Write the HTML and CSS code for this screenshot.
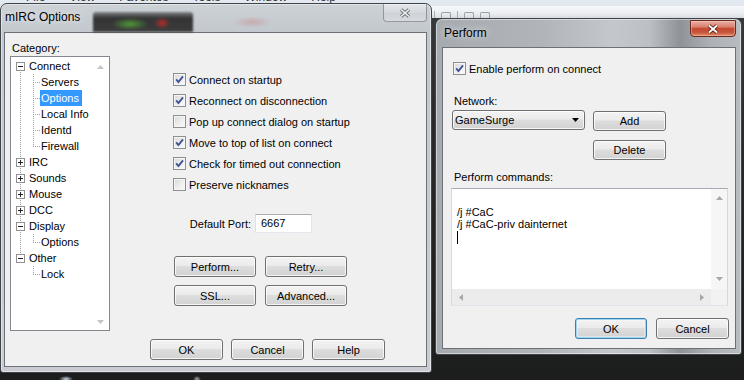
FILE: index.html
```html
<!DOCTYPE html>
<html>
<head>
<meta charset="utf-8">
<title>mIRC Options</title>
<link rel="stylesheet" href="styles.css">
</head>
<body>
<div class="desk">
  <div class="topstrip">
    <div class="menubar"><span>File</span><span>View</span><span>Favorites</span><span>Tools</span><span>Window</span><span>Help</span></div>
    <div class="toolbar"><i class="tsep"></i><i class="ticon"></i><i class="tsep"></i><i class="ticon"></i><i class="ticon"></i></div>
  </div>

  <div class="win win-opts">
    <div class="titlebar tb-opts">
      <span class="title">mIRC Options</span>
      <span class="cbtn cbtn-inactive">
        <svg width="12" height="10" viewBox="0 0 12 10"><path d="M2 1.5L10 8.5M10 1.5L2 8.5" stroke="#6b6f74" stroke-width="3.4" fill="none"/><path d="M2 1.5L10 8.5M10 1.5L2 8.5" stroke="#f4f4f4" stroke-width="1.6" fill="none"/></svg>
      </span>
    </div>
    <div class="client opts-client">
      <div class="opts-main">
        <div class="cat">
          <div class="cat-lbl">Category:</div>
          <div class="tree">
            <div class="tree-list">
              <div class="node lrb"><i class="exp minus"></i><span class="nl">Connect</span></div>
              <div class="node child lr lc"><span class="nl">Servers</span></div>
              <div class="node child lr lc"><span class="nl sel">Options</span></div>
              <div class="node child lr lc"><span class="nl">Local Info</span></div>
              <div class="node child lr lc"><span class="nl">Identd</span></div>
              <div class="node child lr lct"><span class="nl">Firewall</span></div>
              <div class="node lr"><i class="exp plus"></i><span class="nl">IRC</span></div>
              <div class="node lr"><i class="exp plus"></i><span class="nl">Sounds</span></div>
              <div class="node lr"><i class="exp plus"></i><span class="nl">Mouse</span></div>
              <div class="node lr"><i class="exp plus"></i><span class="nl">DCC</span></div>
              <div class="node lr"><i class="exp minus"></i><span class="nl">Display</span></div>
              <div class="node child lr lct"><span class="nl">Options</span></div>
              <div class="node lrt"><i class="exp minus"></i><span class="nl">Other</span></div>
              <div class="node child lct"><span class="nl">Lock</span></div>
            </div>
            <div class="tree-sb">
              <svg width="7" height="4" viewBox="0 0 7 4"><polygon points="0,4 3.5,0 7,4" fill="#c4c4c4"/></svg>
              <svg width="7" height="4" viewBox="0 0 7 4"><polygon points="0,0 7,0 3.5,4" fill="#c4c4c4"/></svg>
            </div>
          </div>
        </div>
        <div class="opts-right">
          <div class="checks">
            <div class="chk"><span class="box"><svg width="11" height="11" viewBox="0 0 11 11"><path d="M2.2 5.4L4.4 8L9 2.4" stroke="#3d5392" stroke-width="1.9" fill="none"/></svg></span>Connect on startup</div>
            <div class="chk"><span class="box"><svg width="11" height="11" viewBox="0 0 11 11"><path d="M2.2 5.4L4.4 8L9 2.4" stroke="#3d5392" stroke-width="1.9" fill="none"/></svg></span>Reconnect on disconnection</div>
            <div class="chk"><span class="box"></span>Pop up connect dialog on startup</div>
            <div class="chk"><span class="box"><svg width="11" height="11" viewBox="0 0 11 11"><path d="M2.2 5.4L4.4 8L9 2.4" stroke="#3d5392" stroke-width="1.9" fill="none"/></svg></span>Move to top of list on connect</div>
            <div class="chk"><span class="box"><svg width="11" height="11" viewBox="0 0 11 11"><path d="M2.2 5.4L4.4 8L9 2.4" stroke="#3d5392" stroke-width="1.9" fill="none"/></svg></span>Check for timed out connection</div>
            <div class="chk"><span class="box"></span>Preserve nicknames</div>
          </div>
          <div class="port"><span class="port-lbl">Default Port:</span><span class="edit">6667</span></div>
          <div class="btn-grid">
            <span class="btn">Perform...</span>
            <span class="btn">Retry...</span>
            <span class="btn">SSL...</span>
            <span class="btn">Advanced...</span>
          </div>
        </div>
      </div>
      <div class="opts-foot">
        <span class="btn w73">OK</span>
        <span class="btn w73">Cancel</span>
        <span class="btn w73">Help</span>
      </div>
    </div>
  </div>

  <div class="win win-perf">
    <div class="titlebar tb-perf">
      <span class="title">Perform</span>
      <span class="cbtn cbtn-red">
        <svg width="12" height="10" viewBox="0 0 12 10"><path d="M2 1.5L10 8.5M10 1.5L2 8.5" stroke="#4a1a12" stroke-width="3.6" fill="none"/><path d="M2 1.5L10 8.5M10 1.5L2 8.5" stroke="#ffffff" stroke-width="1.8" fill="none"/></svg>
      </span>
    </div>
    <div class="client perf-client">
      <div class="chk perf-chk"><span class="box"><svg width="11" height="11" viewBox="0 0 11 11"><path d="M2.2 5.4L4.4 8L9 2.4" stroke="#3d5392" stroke-width="1.9" fill="none"/></svg></span>Enable perform on connect</div>
      <div class="plbl net-lbl">Network:</div>
      <div class="net-grid">
        <div class="btn combo"><span>GameSurge</span><svg width="7" height="4" viewBox="0 0 7 4"><polygon points="0,0 7,0 3.5,4" fill="#000"/></svg></div>
        <span class="btn add">Add</span>
        <span class="btn del">Delete</span>
      </div>
      <div class="plbl cmd-lbl">Perform commands:</div>
      <div class="memo">
        <div class="memo-text">
          <div class="ln">&nbsp;</div>
          <div class="ln">/j #CaC</div>
          <div class="ln">/j #CaC-priv dainternet</div>
          <div class="ln"><i class="caret"></i></div>
        </div>
        <div class="vsb">
          <svg width="7" height="4" viewBox="0 0 7 4"><polygon points="0,4 3.5,0 7,4" fill="#a8a8a8"/></svg>
          <svg width="7" height="4" viewBox="0 0 7 4"><polygon points="0,0 7,0 3.5,4" fill="#a8a8a8"/></svg>
        </div>
        <div class="hsb">
          <svg width="4" height="7" viewBox="0 0 4 7"><polygon points="4,0 4,7 0,3.5" fill="#a8a8a8"/></svg>
          <svg width="4" height="7" viewBox="0 0 4 7"><polygon points="0,0 0,7 4,3.5" fill="#a8a8a8"/></svg>
        </div>
        <div class="corner"></div>
      </div>
      <div class="perf-foot">
        <span class="btn btn-def w72">OK</span>
        <span class="btn w73">Cancel</span>
      </div>
    </div>
  </div>
</div>
</body>
</html>
```
FILE: styles.css
```css
* { box-sizing: border-box; margin: 0; padding: 0; }
html, body { width: 744px; height: 380px; overflow: hidden; }
body {
  font-family: "Liberation Sans", Arial, sans-serif;
  font-size: 11px;
  color: #000;
  background: #202121;
}

.desk {
  position: relative;
  width: 744px;
  height: 380px;
  overflow: hidden;
  background:
    radial-gradient(7px 3px at 66px 379px, rgba(225,238,255,0.9), rgba(225,238,255,0)),
    radial-gradient(4px 3px at 197px 379px, rgba(230,230,230,0.7), rgba(230,230,230,0)),
    linear-gradient(to bottom, #3a3b3c 0, #2a2b2c 120px, #1c1d1d 380px);
}

/* background main window strip */
.topstrip {
  height: 18px;
  display: flex;
  flex-direction: column;
  background: linear-gradient(to bottom, #e3e9f1 0, #e3e9f1 5px, #cfd5dc 5px, #f6f7f9 6px, #eceff2 13px, #d7dbe0 18px);
}
.menubar {
  height: 4px;
  overflow: hidden;
  display: flex;
  padding-left: 26px;
  font-size: 12px;
  line-height: 14px;
  color: #333;
}
.menubar span { margin-top: -10px; margin-right: 24px; }
.toolbar {
  margin: 7px 0 0 434px;
  height: 7px;
  display: flex;
  align-items: flex-end;
  gap: 6px;
}
.tsep { width: 1px; height: 7px; background: #a9aeb5; }
.ticon { width: 10px; height: 6px; border: 1px solid #9aa0a7; border-bottom: none; border-radius: 2px 2px 0 0; }

/* windows */
.win {
  position: absolute;
  display: flex;
  flex-direction: column;
  border: 1px solid #3f444a;
  border-radius: 7px 7px 3px 3px;
  box-shadow: inset 0 0 0 1px rgba(255,255,255,0.45);
}
.win-opts {
  left: 0;
  top: 3px;
  width: 432px;
  height: 370px;
  padding: 0 4px 5px 3px;
  background: linear-gradient(to bottom, #cdd2d7 0, #c3c8ce 28px, #c9cdd2 100%);
}
.win-perf {
  left: 435px;
  top: 18px;
  width: 307px;
  height: 337px;
  padding: 0 5px 5px 6px;
  background: linear-gradient(to right, #a6abb0 0, #b1b5ba 35%, #c4c8cc 58%, #bcc0c4 70%, #8f9398 80%, #adb1b5 90%, #b9bdc1 100%);
}

.titlebar {
  height: 28px;
  flex: none;
  display: flex;
  align-items: flex-start;
  position: relative;
}
.title {
  position: relative;
  font-size: 12px;
  line-height: 16px;
  color: #000;
  text-shadow: 0 0 6px rgba(255,255,255,0.9);
}
.tb-opts .title { margin: 5px 0 0 1px; }
.tb-perf .title { margin: 6px 0 0 2px; }

/* blurred desktop content seen through the glass title bar */
.tb-opts::before {
  content: "";
  position: absolute;
  left: 89px;
  top: 8px;
  width: 100px;
  height: 20px;
  border-radius: 3px 3px 0 0;
  background:
    radial-gradient(18px 6px at 37px 12px, rgba(80,160,55,0.95), rgba(80,160,55,0)),
    radial-gradient(8px 6px at 69px 11px, rgba(200,40,40,0.9), rgba(200,40,40,0)),
    linear-gradient(to bottom, rgba(70,70,70,0.55) 0, rgba(38,38,38,0.92) 6px, rgba(45,45,45,0.9) 100%);
  filter: blur(1px);
}
.tb-opts::after {
  content: "";
  position: absolute;
  left: 228px;
  top: 12px;
  width: 40px;
  height: 12px;
  background: radial-gradient(20px 6px at 20px 6px, rgba(200,110,110,0.35), rgba(200,110,110,0));
}

.cbtn {
  margin-left: auto;
  display: flex;
  align-items: center;
  justify-content: center;
  border-radius: 0 0 4px 4px;
  position: relative;
}
.cbtn-inactive {
  width: 44px;
  height: 18px;
  border: 1px solid rgba(90,95,100,0.55);
  border-top: none;
  background: linear-gradient(rgba(255,255,255,0.45), rgba(255,255,255,0.2) 50%, rgba(255,255,255,0.08) 51%, rgba(255,255,255,0.3));
}
.cbtn-red {
  width: 46px;
  height: 17px;
  margin-top: 1px;
  border: 1px solid #6a2a20;
  background: linear-gradient(#eab0a4 0, #d9806c 40%, #c44a32 50%, #c6543a 75%, #e2906c 100%);
  box-shadow: inset 0 0 0 1px rgba(255,220,210,0.35);
}

.client {
  flex: 1;
  background: #f0f0f0;
  border: 1px solid #6c7177;
}

/* mIRC options client */
.opts-client { display: flex; flex-direction: column; }
.opts-main { display: flex; padding: 9px 0 0 5px; }
.cat { display: flex; flex-direction: column; }
.cat-lbl { height: 13px; line-height: 13px; margin-left: 2px; }
.tree {
  margin-top: 1px;
  width: 100px;
  height: 275px;
  border: 1px solid #828790;
  background: #fff;
  display: flex;
  --dv: repeating-linear-gradient(to bottom, #a0a0a0 0 1px, transparent 1px 2px);
  --dh: repeating-linear-gradient(to right, #a0a0a0 0 1px, transparent 1px 2px);
}
.tree-list { flex: 1; padding-top: 1px; }
.node {
  height: 16px;
  display: flex;
  align-items: center;
  white-space: nowrap;
  --r: none; --rp: 0px; --rh: 100%;
  --c: none; --cp: 0px; --ch: 100%;
  --h: none;
  background-image: var(--r), var(--c), var(--h);
  background-position: 9px var(--rp), 22px var(--cp), 22px 8px;
  background-size: 1px var(--rh), 1px var(--ch), 7px 1px;
  background-repeat: no-repeat;
}
.lr { --r: var(--dv); }
.lrb { --r: var(--dv); --rp: 8px; --rh: 8px; }
.lrt { --r: var(--dv); --rh: 8px; }
.lc { --c: var(--dv); --h: var(--dh); }
.lct { --c: var(--dv); --ch: 8px; --h: var(--dh); }

.exp {
  width: 9px;
  height: 9px;
  margin: 0 3px 0 5px;
  border: 1px solid #919191;
  background-color: #fff;
  background-repeat: no-repeat;
  background-position: center;
}
.minus { background-image: linear-gradient(#222, #222); background-size: 5px 1px; }
.plus {
  background-image: linear-gradient(#222, #222), linear-gradient(#222, #222);
  background-size: 5px 1px, 1px 5px;
}
.nl { line-height: 16px; height: 16px; padding: 0 2px 0 1px; }
.child { padding-left: 29px; }
.child .nl { padding: 0 3px 0 1px; }
.sel { background: #3399ff; color: #fff; }

.tree-sb {
  width: 17px;
  display: flex;
  flex-direction: column;
  justify-content: space-between;
  align-items: center;
  padding: 8px 0 6px;
}

.opts-right { margin-left: 63px; padding-top: 27px; }
.checks { display: flex; flex-direction: column; }
.chk { height: 21px; display: flex; align-items: center; gap: 3px; white-space: nowrap; }
.box {
  width: 13px;
  height: 13px;
  flex: none;
  display: flex;
  align-items: center;
  justify-content: center;
  border: 1px solid #8e8f8f;
  background: linear-gradient(135deg, #d6d6d6 0, #ececec 50%, #fbfbfb 100%);
  box-shadow: inset 0 0 0 1px #f6f6f6;
}

.port { display: flex; align-items: center; gap: 4px; margin: 19px 0 0 16px; height: 19px; }
.port-lbl { width: 62px; text-align: right; white-space: nowrap; }
.edit {
  width: 57px;
  height: 19px;
  line-height: 17px;
  padding-left: 5px;
  background: #fff;
  border: 1px solid;
  border-color: #abadb3 #e2e3ea #e3e9ef #dbdfe6;
}

.btn-grid {
  display: grid;
  grid-template-columns: 82px 82px;
  grid-auto-rows: 21px;
  column-gap: 9px;
  row-gap: 8px;
  margin: 23px 0 0 1px;
}

.btn {
  height: 21px;
  display: flex;
  align-items: center;
  justify-content: center;
  white-space: nowrap;
  border: 1px solid #707070;
  border-radius: 3px;
  background: linear-gradient(#f3f3f3 0, #ebebeb 45%, #dddddd 50%, #d2d2d2 100%);
  box-shadow: inset 0 0 0 1px rgba(255,255,255,0.75);
}
.w73 { width: 73px; }
.w72 { width: 72px; }
.btn-def {
  border-color: #3c7fb1;
  box-shadow: inset 0 0 0 1px #9fd6f2, inset 0 0 0 2px rgba(255,255,255,0.35);
}

.opts-foot { display: flex; gap: 8px; padding-left: 145px; margin-top: 8px; }

/* Perform client */
.perf-client { display: flex; flex-direction: column; padding: 14px 0 0 10px; }
.perf-chk { height: 13px; }
.plbl { height: 13px; line-height: 13px; margin-left: 1px; white-space: nowrap; }
.net-lbl { margin-top: 20px; }
.net-grid {
  display: grid;
  grid-template-columns: 133px 73px;
  column-gap: 8px;
  row-gap: 9px;
  margin: 2px 0 0 -1px;
}
.combo {
  height: 20px;
  justify-content: space-between;
  padding: 0 5px 0 2px;
}
.add { height: 20px; margin-top: 1px; }
.del { height: 20px; grid-column: 2; }
.cmd-lbl { margin-top: 11px; }

.memo {
  width: 277px;
  height: 118px;
  margin: 4px 0 0 -2px;
  border: 1px solid;
  border-color: #a4abb4 #d4d9df #dfe4ea #d4d9df;
  display: grid;
  grid-template-columns: 1fr 16px;
  grid-template-rows: 1fr 16px;
}
.memo-text { background: #fff; padding: 4px 0 0 5px; }
.ln { height: 12.5px; line-height: 12.5px; white-space: nowrap; }
.caret { display: inline-block; width: 1px; height: 13px; background: #000; vertical-align: top; }
.vsb {
  background: #f6f6f6;
  display: flex;
  flex-direction: column;
  justify-content: space-between;
  align-items: center;
  padding: 7px 0 8px;
}
.hsb {
  background: #ececec;
  display: flex;
  justify-content: space-between;
  align-items: center;
  padding: 0 7px;
}
.corner { background: #f2f2f2; }

.perf-foot { display: flex; justify-content: flex-end; gap: 9px; margin-top: 12px; padding-right: 6px; }
```
